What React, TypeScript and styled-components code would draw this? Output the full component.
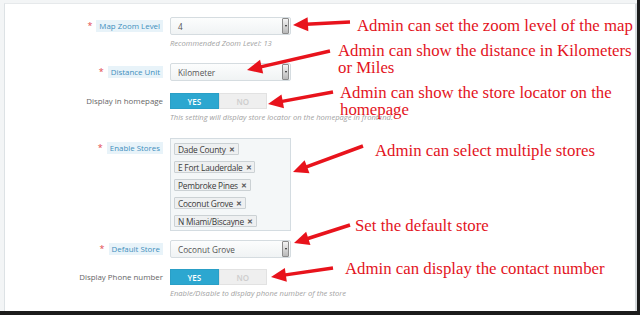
import React from 'react';
import styled, { createGlobalStyle } from 'styled-components';

const GlobalStyle = createGlobalStyle`
  html, body { margin: 0; padding: 0; }
  body {
    width: 640px;
    height: 315px;
    overflow: hidden;
    background: #1c1c1c;
    font-family: 'Open Sans', 'Liberation Sans', sans-serif;
  }
`;

const Frame = styled.div`
  position: relative;
  width: 640px;
  height: 315px;
  box-sizing: border-box;
  padding: 0 3px 4px 0;
  background: #1c1c1c;
  display: flex;
`;

const Screen = styled.div`
  flex: 1;
  display: flex;
  background: #f3f5f6;
  padding: 3px 0 0 4px;
`;

const Panel = styled.div`
  flex: 1;
  display: flex;
  flex-direction: column;
  background: #fff;
  border-top: 1px solid #e6e9eb;
  border-left: 1px solid #dde2e5;
  border-right: 2px solid #d6dadd;
  padding-top: 13px;
`;

const Field = styled.div<{ $top?: number; $align?: string }>`
  display: grid;
  grid-template-columns: 158px 121px;
  column-gap: 7px;
  align-items: ${(p) => p.$align || 'center'};
  margin-top: ${(p) => p.$top || 0}px;
`;

const LabelCell = styled.div<{ $offset?: number }>`
  display: flex;
  justify-content: flex-end;
  align-items: center;
  gap: 4px;
  margin-top: ${(p) => p.$offset || 0}px;
`;

const Star = styled.span`
  color: #e2464d;
  font-size: 9px;
  line-height: 12px;
`;

const Label = styled.span<{ $required?: boolean }>`
  font-size: 7.9px;
  line-height: 12px;
  padding: ${(p) => (p.$required ? '0 3px' : '0')};
  color: ${(p) => (p.$required ? '#3f8fbd' : '#666')};
  background: ${(p) => (p.$required ? '#e8f3f9' : 'transparent')};
  white-space: nowrap;
`;

const Select = styled.div`
  position: relative;
  height: 18px;
  box-sizing: border-box;
  display: flex;
  align-items: center;
  padding-left: 7px;
  border: 1px solid #d5dce0;
  border-radius: 2px;
  background: linear-gradient(#fcfdfd, #f0f3f4);
  color: #555;
  font-size: 8.2px;
`;

const SelectButton = styled.span`
  position: absolute;
  right: 1px;
  top: 0px;
  bottom: 0px;
  width: 5px;
  border: 1px solid #8c8c8c;
  border-radius: 1px;
  background: linear-gradient(#f4f4f4, #b9b9b9);
  display: flex;
  align-items: center;
  justify-content: center;
  &::after {
    content: '';
    border-left: 1.5px solid transparent;
    border-right: 1.5px solid transparent;
    border-top: 2px solid #222;
  }
`;

const Toggle = styled.div`
  display: flex;
  width: 97px;
  height: 16px;
`;

const ToggleOption = styled.span<{ $on?: boolean }>`
  flex: 1;
  display: flex;
  align-items: center;
  justify-content: center;
  box-sizing: border-box;
  font-size: 8px;
  font-weight: 600;
  color: ${(p) => (p.$on ? '#fff' : '#cdcdcd')};
  background: ${(p) => (p.$on ? '#2ca7d0' : '#efefef')};
  border: 1px solid ${(p) => (p.$on ? '#2a9fc6' : '#e2e2e2')};
`;

const Hint = styled.div`
  margin: 3px 0 0 165px;
  font-size: 7.6px;
  line-height: 10px;
  font-style: italic;
  color: #a2a2a2;
  white-space: nowrap;
`;

const TagBox = styled.div`
  height: 93px;
  box-sizing: border-box;
  display: flex;
  flex-direction: column;
  align-items: flex-start;
  gap: 6px;
  padding: 4px 3px;
  border: 1px solid #d4dce1;
  background: #f4f7f8;
`;

const Tag = styled.span`
  height: 12px;
  box-sizing: border-box;
  display: flex;
  align-items: center;
  gap: 3px;
  padding: 0 3px;
  border: 1px solid #cbd1d4;
  border-radius: 1px;
  background: #eef0f1;
  color: #3a3a3a;
  font-size: 8.4px;
  letter-spacing: -0.25px;
  white-space: nowrap;
  &::after {
    content: '✕';
    font-size: 6.5px;
    font-weight: 700;
    color: #555;
  }
`;

const Note = styled.div<{ $x: number; $y: number }>`
  position: absolute;
  left: ${(p) => p.$x}px;
  top: ${(p) => p.$y}px;
  font-family: 'Liberation Serif', 'Times New Roman', serif;
  font-size: 16.8px;
  line-height: 17px;
  color: #e3141d;
  white-space: nowrap;
`;

const Overlay = styled.svg`
  position: absolute;
  left: 0;
  top: 0;
  pointer-events: none;
`;

type ArrowProps = { x1: number; y1: number; x2: number; y2: number };

const Arrow = ({ x1, y1, x2, y2 }: ArrowProps) => {
  const dx = x2 - x1;
  const dy = y2 - y1;
  const len = Math.hypot(dx, dy);
  const ux = dx / len;
  const uy = dy / len;
  const headLen = 15;
  const headHalf = 7;
  const bx = x2 - ux * headLen;
  const by = y2 - uy * headLen;
  const px = -uy * headHalf;
  const py = ux * headHalf;
  return (
    <g>
      <line x1={x1} y1={y1} x2={bx + ux * 2} y2={by + uy * 2} stroke="#e8131c" strokeWidth={3.5} />
      <polygon points={`${x2},${y2} ${bx + px},${by + py} ${bx - px},${by - py}`} fill="#e8131c" />
    </g>
  );
};

const arrows: ArrowProps[] = [
  { x1: 350, y1: 22, x2: 293, y2: 25 },
  { x1: 330, y1: 51, x2: 247, y2: 70 },
  { x1: 333, y1: 92, x2: 268, y2: 104 },
  { x1: 363, y1: 146, x2: 293, y2: 172 },
  { x1: 350, y1: 225, x2: 294, y2: 243 },
  { x1: 333, y1: 268, x2: 271, y2: 277 },
];

const stores = ['Dade County', 'E Fort Lauderdale', 'Pembroke Pines', 'Coconut Grove', 'N Miami/Biscayne'];

export default function App() {
  return (
    <Frame>
      <GlobalStyle />
      <Screen>
        <Panel>
          <Field>
            <LabelCell>
              <Star>*</Star>
              <Label $required>Map Zoom Level</Label>
            </LabelCell>
            <Select>
              4
              <SelectButton />
            </Select>
          </Field>
          <Hint>Recommended Zoom Level: 13</Hint>

          <Field $top={15}>
            <LabelCell>
              <Star>*</Star>
              <Label $required>Distance Unit</Label>
            </LabelCell>
            <Select>
              Kilometer
              <SelectButton />
            </Select>
          </Field>

          <Field $top={12}>
            <LabelCell>
              <Label>Display in homepage</Label>
            </LabelCell>
            <Toggle>
              <ToggleOption $on>YES</ToggleOption>
              <ToggleOption>NO</ToggleOption>
            </Toggle>
          </Field>
          <Hint>This setting will display store locator on the homepage in frontend.</Hint>

          <Field $top={16} $align="start">
            <LabelCell $offset={4}>
              <Star>*</Star>
              <Label $required>Enable Stores</Label>
            </LabelCell>
            <TagBox>
              {stores.map((s) => (
                <Tag key={s}>{s}</Tag>
              ))}
            </TagBox>
          </Field>

          <Field $top={9}>
            <LabelCell>
              <Star>*</Star>
              <Label $required>Default Store</Label>
            </LabelCell>
            <Select>
              Coconut Grove
              <SelectButton />
            </Select>
          </Field>

          <Field $top={11}>
            <LabelCell>
              <Label>Display Phone number</Label>
            </LabelCell>
            <Toggle>
              <ToggleOption $on>YES</ToggleOption>
              <ToggleOption>NO</ToggleOption>
            </Toggle>
          </Field>
          <Hint>Enable/Disable to display phone number of the store</Hint>
        </Panel>
      </Screen>

      <Overlay width={640} height={315}>
        {arrows.map((a, i) => (
          <Arrow key={i} {...a} />
        ))}
      </Overlay>

      <Note $x={357} $y={17}>Admin can set the zoom level of the map</Note>
      <Note $x={338} $y={42}>
        Admin can show the distance in Kilometers
        <br />
        or Miles
      </Note>
      <Note $x={340} $y={84}>
        Admin can show the store locator on the
        <br />
        homepage
      </Note>
      <Note $x={375} $y={142}>Admin can select multiple stores</Note>
      <Note $x={355} $y={217}>Set the default store</Note>
      <Note $x={345} $y={260}>Admin can display the contact number</Note>
    </Frame>
  );
}
